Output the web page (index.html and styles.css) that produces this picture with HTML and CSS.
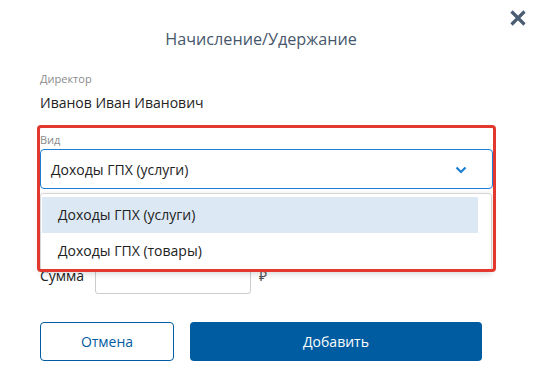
FILE: index.html
```html
<!DOCTYPE html>
<html lang="ru">
<head>
<meta charset="utf-8">
<link rel="stylesheet" href="styles.css">
</head>
<body>
<div class="modal">
  <button class="close" aria-label="Закрыть">
    <svg width="18" height="18" viewBox="0 0 18 18"><path d="M2.5 2.5 L15.5 15.5 M15.5 2.5 L2.5 15.5" stroke="#4b5d72" stroke-width="3.2" stroke-linecap="butt"/></svg>
  </button>
  <h1 class="title">Начисление/Удержание</h1>
  <div class="field director">
    <div class="label">Директор</div>
    <div class="value">Иванов Иван Иванович</div>
  </div>
  <div class="field kind">
    <div class="label">Вид</div>
    <div class="select">
      <span>Доходы ГПХ (услуги)</span>
      <svg class="chev" width="12" height="8" viewBox="0 0 12 8"><path d="M1.5 1.5 L6 6 L10.5 1.5" fill="none" stroke="#1a7fd4" stroke-width="2.2"/></svg>
    </div>
    <ul class="dropdown">
      <li class="option active">Доходы ГПХ (услуги)</li>
      <li class="option">Доходы ГПХ (товары)</li>
    </ul>
    <div class="highlight"></div>
  </div>
  <div class="sum-row">
    <span class="sum-label">Сумма</span>
    <div class="input"></div>
    <span class="cur">₽</span>
  </div>
  <div class="buttons">
    <button class="btn cancel">Отмена</button>
    <button class="btn add">Добавить</button>
  </div>
</div>
</body>
</html>
```
FILE: styles.css
```css
* { box-sizing: border-box; }
html, body { margin: 0; padding: 0; background: #fff; }
body { font-family: "Open Sans", "Noto Sans", sans-serif; color: #222; }
.modal { position: relative; width: 536px; height: 389px; padding: 0 54px 0 40px; }
.close { position: absolute; top: 9px; right: 9px; width: 18px; height: 18px; padding: 0; border: 0; background: none; display: flex; }
.title { margin: 0; padding-top: 27px; height: 71px; font-size: 16.2px; font-weight: 400; text-align: center; color: #46576b; line-height: 24px; }
.label { font-size: 11px; color: #8a8a8a; line-height: 16px; }
.director .value { font-size: 14px; line-height: 20px; margin-top: 6px; color: #222; }
.kind { position: relative; margin-top: 20px; margin-right: -11px; }
.kind .label { line-height: 14px; margin-bottom: 2px; }
.select { height: 40px; border: 1px solid #1a7fd4; border-radius: 4px; display: flex; align-items: center; justify-content: space-between; padding: 0 25px 0 10px; font-size: 14px; color: #222; }
.chev { margin-top: 1px; }
.dropdown { position: absolute; left: 0; top: 60px; width: 452px; margin: 0; padding: 3px 13px 2px 1px; list-style: none; background: #fff; border: 1px solid #d6d6d6; border-radius: 3px; box-shadow: 0 2px 6px rgba(0,0,0,0.15); z-index: 2; }
.option { height: 36px; line-height: 36px; padding-left: 16px; font-size: 14px; color: #222; }
.option.active { background: #dce9f4; }
.highlight { position: absolute; left: -3px; top: -8px; width: 459px; height: 147px; border: 3px solid #e2382e; border-radius: 4px; z-index: 3; pointer-events: none; }
.sum-row { display: flex; align-items: flex-start; margin-top: 74px; height: 31px; }
.sum-label { width: 55px; font-size: 14px; line-height: 20px; margin-top: 3px; color: #222; }
.input { width: 156px; height: 31px; border: 1px solid #ccc; border-radius: 3px; }
.cur { margin-left: 8px; font-size: 14px; line-height: 20px; margin-top: 3px; color: #555; }
.buttons { display: flex; gap: 16px; margin-top: 28px; }
.btn { height: 39px; border-radius: 4px; font-family: inherit; font-size: 14px; cursor: pointer; }
.cancel { width: 134px; border: 1px solid #005ca1; background: #fff; color: #005ca1; }
.add { flex: 1; border: 0; background: #005ca1; color: #fff; }
```
